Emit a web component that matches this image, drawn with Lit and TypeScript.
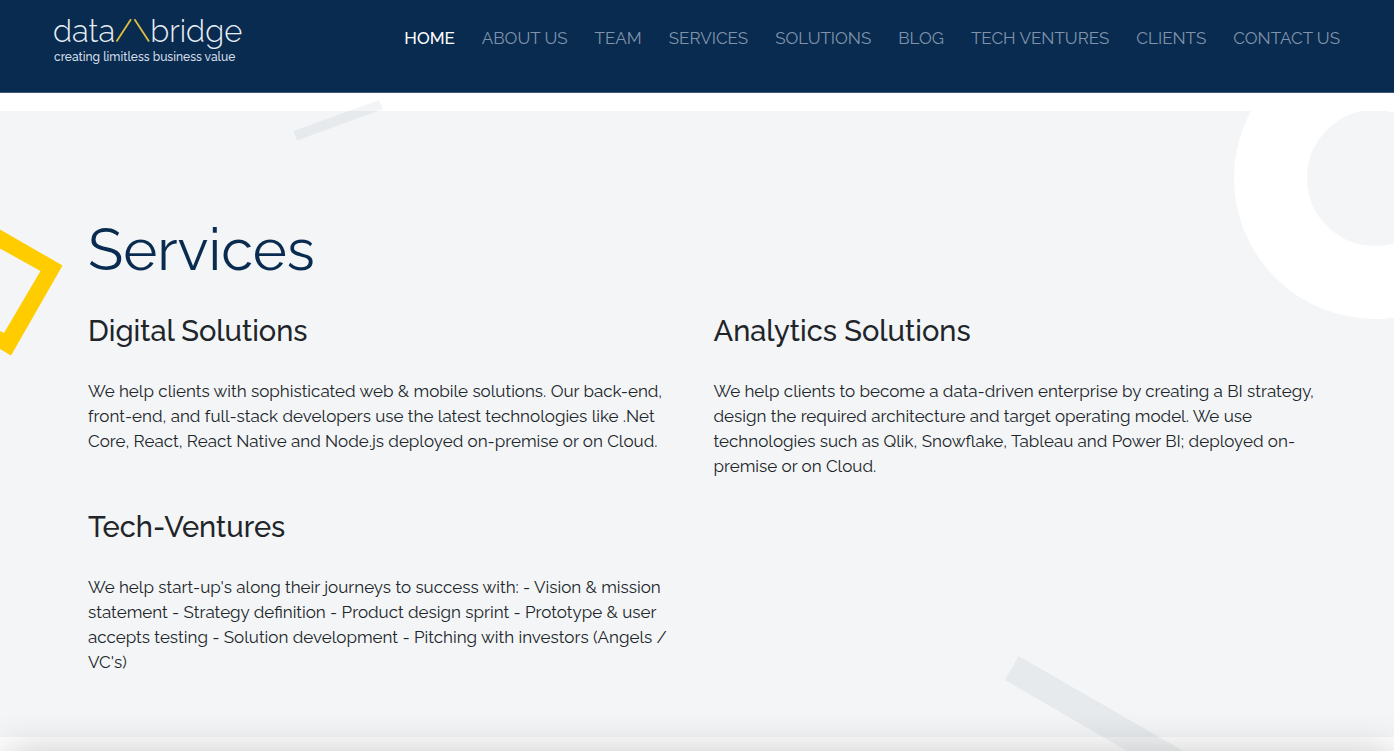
import { LitElement, html, css } from "lit";
import { customElement, state } from "lit/decorators.js";

interface Service {
  title: string;
  text: string;
}

const NAV = [
  "HOME",
  "ABOUT US",
  "TEAM",
  "SERVICES",
  "SOLUTIONS",
  "BLOG",
  "TECH VENTURES",
  "CLIENTS",
  "CONTACT US",
];

const SERVICES: Service[] = [
  {
    title: "Digital Solutions",
    text: "We help clients with sophisticated web & mobile solutions. Our back-end, front-end, and full-stack developers use the latest technologies like .Net Core, React, React Native and Node.js deployed on-premise or on Cloud.",
  },
  {
    title: "Analytics Solutions",
    text: "We help clients to become a data-driven enterprise by creating a BI strategy, design the required architecture and target operating model. We use technologies such as Qlik, Snowflake, Tableau and Power BI; deployed on-premise or on Cloud.",
  },
  {
    title: "Tech-Ventures",
    text: "We help start-up's along their journeys to success with: - Vision & mission statement - Strategy definition - Product design sprint - Prototype & user accepts testing - Solution development - Pitching with investors (Angels / VC's)",
  },
];

@customElement("site-header")
export class SiteHeader extends LitElement {
  @state() private current = "HOME";

  static styles = css`
    :host {
      display: block;
      position: relative;
      z-index: 2;
    }
    .bar {
      display: flex;
      justify-content: space-between;
      align-items: flex-start;
      box-sizing: border-box;
      padding: 13px 54px 27px 53px;
      background: #082b4f;
      border-bottom: 1px solid #3c5878;
    }
    .brand {
      display: block;
      color: #e8eef5;
      text-decoration: none;
    }
    .name {
      display: flex;
      font-size: 31px;
      font-weight: 300;
      line-height: 36px;
    }
    .peak {
      width: 35px;
      height: 24px;
      margin-top: 5px;
    }
    .tagline {
      display: block;
      padding-left: 1px;
      font-size: 12px;
      font-weight: 500;
      line-height: 16px;
      color: #d3dde9;
    }
    .links {
      display: flex;
      gap: 27px;
      margin: 0;
      padding: 13px 0 0;
      list-style: none;
    }
    .link {
      font-size: 17px;
      line-height: 25px;
      color: #8193ab;
      text-decoration: none;
      white-space: nowrap;
    }
    .link.active {
      color: #ffffff;
      font-weight: 500;
    }
  `;

  render() {
    return html`
      <header class="bar">
        <a class="brand" href="#home" aria-label="data bridge, creating limitless business value">
          <span class="name">
            <span>data</span>
            <svg class="peak" viewBox="0 0 35 24" fill="none" stroke="#e0bd3c" stroke-width="1.8" aria-hidden="true">
              <path d="M1.5 23.5 16 1.2M19.5 1.2 34 23.5" />
            </svg>
            <span>bridge</span>
          </span>
          <span class="tagline">creating limitless business value</span>
        </a>
        <nav aria-label="Main">
          <ul class="links">
            ${NAV.map(
              (item) => html`<li>
                <a
                  class="link ${item === this.current ? "active" : ""}"
                  href="#${item.toLowerCase().replace(" ", "-")}"
                  @click=${() => (this.current = item)}
                  >${item}</a
                >
              </li>`
            )}
          </ul>
        </nav>
      </header>
    `;
  }
}

@customElement("app-root")
export class AppRoot extends LitElement {
  static styles = css`
    :host {
      display: block;
      position: relative;
      min-height: 100vh;
      overflow: hidden;
      background: #ffffff;
      color: #212529;
      font-family: Raleway, Lato, "Open Sans", sans-serif;
    }
    .page {
      padding-top: 18px;
    }
    .services {
      position: relative;
      background: #f3f5f7;
      padding: 104px 75px 62px 88px;
    }
    .content {
      position: relative;
    }
    .heading {
      margin: 0 0 29px;
      font-size: 58px;
      font-weight: 400;
      line-height: 70px;
      color: #082b4f;
    }
    .grid {
      display: grid;
      grid-template-columns: 1fr 1fr;
      gap: 31px 20px;
    }
    .title {
      margin: 0 0 30px;
      font-size: 29px;
      font-weight: 500;
      line-height: 35px;
    }
    .text {
      margin: 0;
      font-size: 17px;
      line-height: 25px;
    }
    .shape {
      position: absolute;
      overflow: visible;
    }
    .ring {
      top: -74px;
      right: -122px;
      width: 282px;
      height: 282px;
    }
    .square {
      top: 117px;
      left: 0;
      width: 64px;
      height: 130px;
    }
    .dash {
      top: -12px;
      left: 293px;
      width: 90px;
      height: 42px;
    }
    .beam {
      bottom: -19px;
      right: 189px;
      width: 200px;
      height: 100px;
    }
    .next {
      position: relative;
      height: 14px;
    }
    .panel {
      position: absolute;
      top: 16px;
      left: 4px;
      right: 0;
      height: 80px;
      background: #ffffff;
      box-shadow: 0 0 40px rgba(0, 0, 0, 0.24);
    }
  `;

  render() {
    return html`
      <site-header></site-header>
      <main class="page">
        <section class="services" id="services">
          <svg class="shape ring" viewBox="0 0 282 282" aria-hidden="true">
            <circle cx="141" cy="141" r="104.5" fill="none" stroke="#ffffff" stroke-width="73" />
          </svg>
          <svg class="shape square" viewBox="0 0 64 130" aria-hidden="true">
            <path
              d="M0 1.5 62.5 37.5 11 127.5 0 121V103L4 105 40.5 43 0 20.5Z"
              fill="#ffcc00"
            />
          </svg>
          <svg class="shape dash" viewBox="0 0 90 42" aria-hidden="true">
            <path d="M0.5 32 86 1 90 10 4 41.5Z" fill="rgba(20,55,70,0.055)" />
          </svg>
          <svg class="shape beam" viewBox="0 0 200 100" aria-hidden="true">
            <path d="M13.5 0 0 24 131 100H187Z" fill="rgba(20,55,70,0.055)" />
          </svg>
          <div class="content">
            <h1 class="heading">Services</h1>
            <div class="grid">
              ${SERVICES.map(
                (s) => html`<article>
                  <h2 class="title">${s.title}</h2>
                  <p class="text">${s.text}</p>
                </article>`
              )}
            </div>
          </div>
        </section>
        <div class="next"><div class="panel"></div></div>
      </main>
    `;
  }
}
